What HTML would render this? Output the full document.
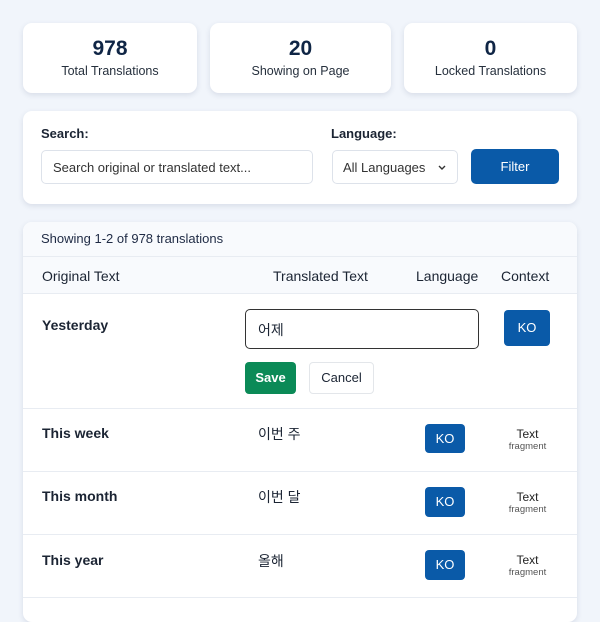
<!DOCTYPE html>
<html><head><style>
*{margin:0;padding:0;box-sizing:border-box}
body{width:600px;height:600px;overflow:hidden;background:#f1f5fb;font-family:"Liberation Sans","Noto Sans CJK KR",sans-serif;color:#1b2433;position:relative}
.a{position:absolute}
.card{position:absolute;background:#fff;border-radius:9px;box-shadow:0 2px 6px rgba(30,50,90,.12)}
.num{position:absolute;left:0;right:0;text-align:center;top:14px;font-size:21px;font-weight:bold;color:#0f2545}
.lbl{position:absolute;left:0;right:0;text-align:center;top:41px;font-size:12.5px;color:#26303d}
.ko{position:absolute;background:#0a5aa8;color:#fff;border-radius:4px;font-size:13px;text-align:center}
.frag{position:absolute;left:505px;width:45px;text-align:center;font-size:12px;line-height:14px;color:#222}
.frag small{display:block;font-size:9.5px;color:#555;line-height:12px}
.hr{position:absolute;left:23px;width:554px;height:1px;background:#e8ecf2}
.t{position:absolute;font-size:14px;font-weight:bold;color:#1b2433}
</style></head><body>
<div class="card" style="left:23px;top:23px;width:174px;height:70px"><div class="num">978</div><div class="lbl">Total Translations</div></div>
<div class="card" style="left:210px;top:23px;width:181px;height:70px"><div class="num">20</div><div class="lbl">Showing on Page</div></div>
<div class="card" style="left:404px;top:23px;width:173px;height:70px"><div class="num">0</div><div class="lbl">Locked Translations</div></div>

<div class="card" style="left:23px;top:111px;width:554px;height:93px"></div>
<div class="a" style="left:41px;top:126px;font-size:13px;font-weight:bold">Search:</div>
<div class="a" style="left:41px;top:150px;width:272px;height:34px;border:1px solid #dde2ea;border-radius:5px;font-size:13px;padding:9px 11px;color:#333">Search original or translated text...</div>
<div class="a" style="left:331px;top:126px;font-size:13px;font-weight:bold">Language:</div>
<div class="a" style="left:332px;top:150px;width:126px;height:34px;border:1px solid #dde2ea;border-radius:5px;font-size:13px;padding:9px 10px;color:#333">All Languages<svg style="position:absolute;right:11px;top:14px" width="8" height="6" viewBox="0 0 8 6"><path d="M1 1l3 3 3-3" stroke="#333" stroke-width="1.4" fill="none"/></svg></div>
<div class="a" style="left:471px;top:149px;width:88px;height:35px;background:#0a5aa8;border-radius:5px;color:#fff;font-size:13px;text-align:center;line-height:35px">Filter</div>

<div class="card" style="left:23px;top:222px;width:554px;height:400px"></div>
<div class="a" style="left:23px;top:222px;width:554px;height:71px;background:#f8fafd;border-radius:9px 9px 0 0"></div>
<div class="a" style="left:41px;top:231px;font-size:13px;color:#1e2a44">Showing 1-2 of 978 translations</div>
<div class="hr" style="top:256px"></div>
<div class="a" style="left:42px;top:268px;font-size:14px">Original Text</div>
<div class="a" style="left:273px;top:268px;font-size:14px">Translated Text</div>
<div class="a" style="left:416px;top:268px;font-size:14px">Language</div>
<div class="a" style="left:501px;top:268px;font-size:14px">Context</div>
<div class="hr" style="top:293px"></div>

<div class="t" style="left:42px;top:317px">Yesterday</div>
<div class="a" style="left:245px;top:309px;width:234px;height:40px;border:1.5px solid #333;border-radius:5px;font-size:14px;padding:10px 12px">어제</div>
<div class="ko" style="left:504px;top:310px;width:46px;height:36px;line-height:36px">KO</div>
<div class="a" style="left:245px;top:362px;width:51px;height:32px;background:#0b8a57;border-radius:4px;color:#fff;font-size:13px;font-weight:bold;text-align:center;line-height:32px">Save</div>
<div class="a" style="left:309px;top:362px;width:65px;height:32px;border:1px solid #e3e6ea;border-radius:4px;font-size:13px;text-align:center;line-height:30px">Cancel</div>
<div class="hr" style="top:408px"></div>

<div class="t" style="left:42px;top:425px">This week</div>
<div class="a" style="left:258px;top:424px;font-size:14px">이번 주</div>
<div class="ko" style="left:425px;top:424px;width:40px;height:29px;line-height:29px">KO</div>
<div class="frag" style="top:427px">Text<small>fragment</small></div>
<div class="hr" style="top:471px"></div>

<div class="t" style="left:42px;top:488px">This month</div>
<div class="a" style="left:258px;top:487px;font-size:14px">이번 달</div>
<div class="ko" style="left:425px;top:487px;width:40px;height:30px;line-height:30px">KO</div>
<div class="frag" style="top:490px">Text<small>fragment</small></div>
<div class="hr" style="top:534px"></div>

<div class="t" style="left:42px;top:552px">This year</div>
<div class="a" style="left:258px;top:551px;font-size:14px">올해</div>
<div class="ko" style="left:425px;top:550px;width:40px;height:30px;line-height:30px">KO</div>
<div class="frag" style="top:553px">Text<small>fragment</small></div>
<div class="hr" style="top:597px"></div>
</body></html>
